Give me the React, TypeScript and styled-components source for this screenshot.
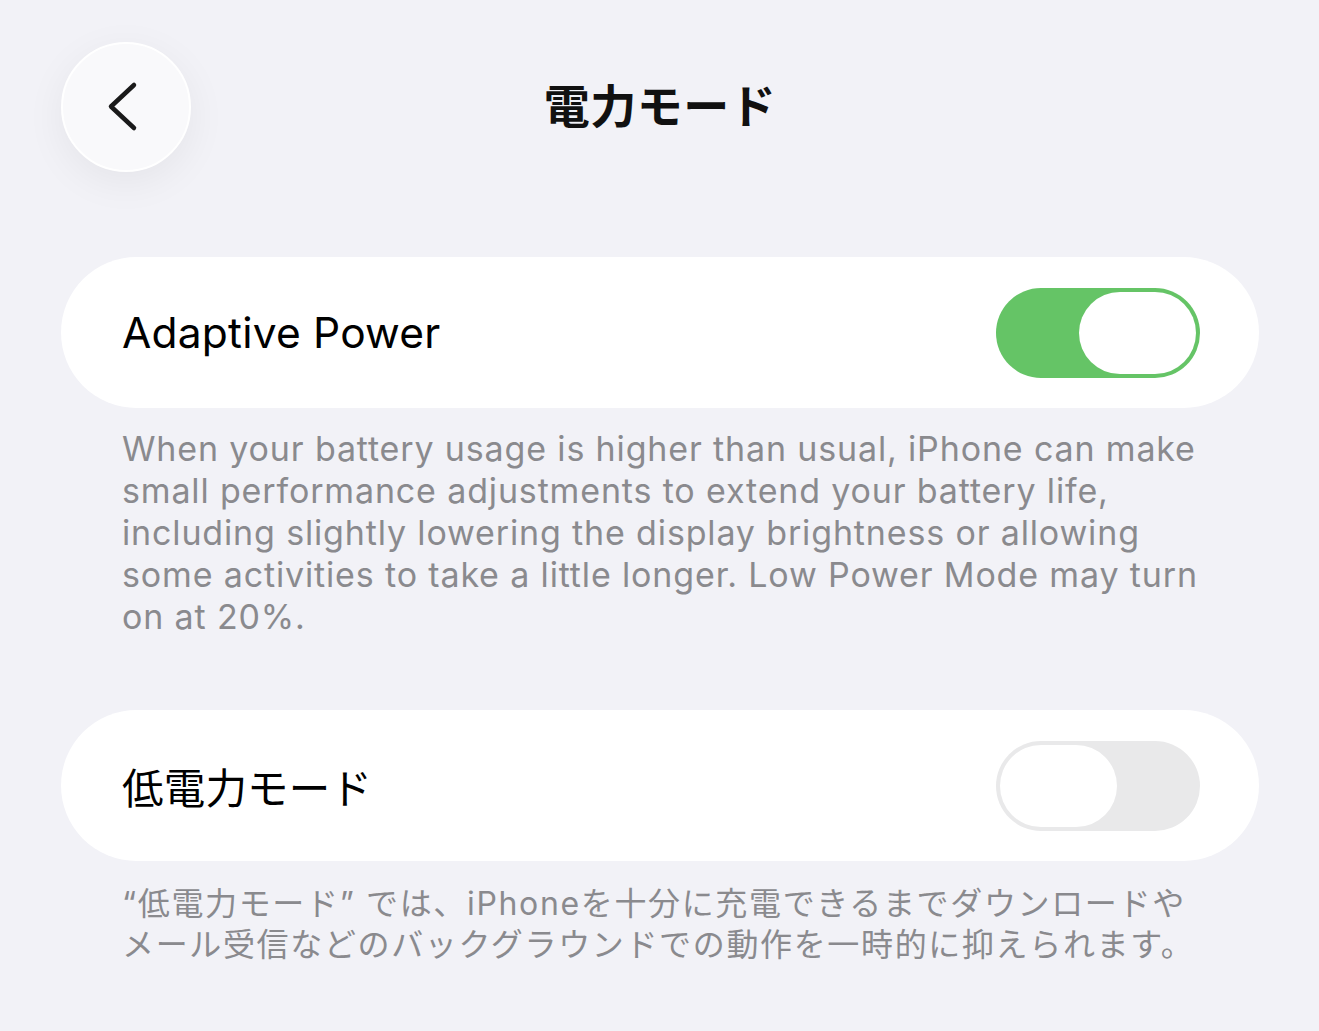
import React from "react";
import styled, { createGlobalStyle } from "styled-components";

const GlobalStyle = createGlobalStyle`
  html, body {
    margin: 0;
    padding: 0;
    background: #f2f2f7;
  }
  body {
    font-family: Inter, "Noto Sans CJK JP", sans-serif;
    -webkit-font-smoothing: antialiased;
  }
`;

const StyledPage = styled.div`
  width: 1319px;
  height: 1031px;
  overflow: hidden;
  background: #f2f2f7;
  box-sizing: border-box;
  padding: 42px 60px 0 61px;
`;

const StyledHeader = styled.div`
  display: grid;
  grid-template-columns: 130px 1fr 130px;
  align-items: center;
  height: 130px;
`;

const StyledBackButton = styled.button`
  width: 130px;
  height: 130px;
  border-radius: 50%;
  border: 2px solid #ffffff;
  background: #f9f9fb;
  box-shadow: 0 10px 40px rgba(0, 0, 0, 0.06);
  display: flex;
  align-items: center;
  justify-content: center;
  padding: 0;
  box-sizing: border-box;
`;

const StyledTitle = styled.h1`
  margin: 0 0 8px;
  text-align: center;
  font-size: 46px;
  font-weight: 700;
  color: #111;
  letter-spacing: 0.5px;
`;

const StyledCard = styled.div<{ $top: number }>`
  margin-top: ${(p) => p.$top}px;
  height: 151px;
  border-radius: 76px;
  background: #ffffff;
  display: flex;
  align-items: center;
  justify-content: space-between;
  padding: 0 59px 0 61px;
  box-sizing: border-box;
`;

const StyledLabel = styled.div<{ $jp?: boolean }>`
  font-size: ${(p) => (p.$jp ? "41.5px" : "42.5px")};
  color: #000;
  letter-spacing: 0.2px;
`;

const StyledToggle = styled.div<{ $on: boolean }>`
  width: 204px;
  height: 90px;
  border-radius: 45px;
  background: ${(p) => (p.$on ? "#65c466" : "#e9e9ea")};
  display: flex;
  justify-content: ${(p) => (p.$on ? "flex-end" : "flex-start")};
  align-items: center;
  padding: 0 4px;
  box-sizing: border-box;
`;

const StyledKnob = styled.div`
  width: 117px;
  height: 82px;
  border-radius: 41px;
  background: #ffffff;
`;

const StyledNote = styled.p`
  margin: 20px 0 0 61px;
  width: 1110px;
  font-size: 34px;
  line-height: 42px;
  color: #8a8a8e;
  letter-spacing: 0.85px;
  white-space: nowrap;
`;

const StyledJpNote = styled(StyledNote)`
  margin-top: 22px;
  font-size: 32px;
  line-height: 41px;
  letter-spacing: 1.65px;
`;

const Toggle = (props: { on: boolean }): JSX.Element => (
  <StyledToggle $on={props.on}>
    <StyledKnob />
  </StyledToggle>
);

const App = (): JSX.Element => {
  return (
    <React.Fragment>
      <GlobalStyle />
      <StyledPage>
        <StyledHeader>
          <StyledBackButton aria-label="戻る">
            <svg width="40" height="60" viewBox="0 0 40 60">
              <path
                d="M28 8 L5 29.5 L28 51"
                fill="none"
                stroke="#1a1a1a"
                strokeWidth="4.5"
                strokeLinecap="round"
                strokeLinejoin="round"
              />
            </svg>
          </StyledBackButton>
          <StyledTitle>電力モード</StyledTitle>
          <div />
        </StyledHeader>

        <StyledCard $top={85}>
          <StyledLabel>Adaptive Power</StyledLabel>
          <Toggle on />
        </StyledCard>
        <StyledNote>
          When your battery usage is higher than usual, iPhone can make
          <br />
          small performance adjustments to extend your battery life,
          <br />
          including slightly lowering the display brightness or allowing
          <br />
          some activities to take a little longer. Low Power Mode may turn
          <br />
          on at 20%.
        </StyledNote>

        <StyledCard $top={72}>
          <StyledLabel $jp>低電力モード</StyledLabel>
          <Toggle on={false} />
        </StyledCard>
        <StyledJpNote>
          “低電力モード” では、iPhoneを十分に充電できるまでダウンロードや
          <br />
          メール受信などのバックグラウンドでの動作を一時的に抑えられます。
        </StyledJpNote>
      </StyledPage>
    </React.Fragment>
  );
};

export default App;
